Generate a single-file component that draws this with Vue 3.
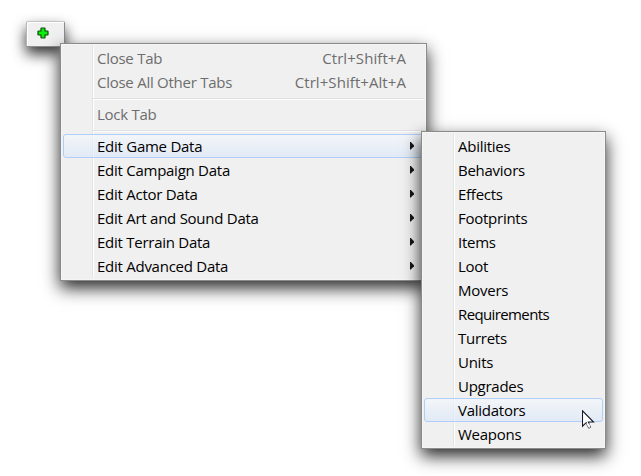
<script setup>
const main = [
  { label: 'Close Tab', keys: 'Ctrl+Shift+A', off: true },
  { label: 'Close All Other Tabs', keys: 'Ctrl+Shift+Alt+A', off: true },
  { sep: true },
  { label: 'Lock Tab', off: true },
  { sep: true },
  { label: 'Edit Game Data', sub: true, active: true },
  { label: 'Edit Campaign Data', sub: true },
  { label: 'Edit Actor Data', sub: true },
  { label: 'Edit Art and Sound Data', sub: true },
  { label: 'Edit Terrain Data', sub: true },
  { label: 'Edit Advanced Data', sub: true },
]
const types = ['Abilities', 'Behaviors', 'Effects', 'Footprints', 'Items', 'Loot', 'Movers', 'Requirements', 'Turrets', 'Units', 'Upgrades', 'Validators', 'Weapons']
</script>

<template>
  <main class="desktop">
    <div class="tab">
      <svg width="12" height="12" viewBox="0 0 12 12">
        <path d="M4 1.500Q4 1 4.500 1h3Q8 1 8 1.500V4h2.500Q11 4 11 4.500v3Q11 8 10.500 8H8v2.500Q8 11 7.500 11h-3Q4 11 4 10.500V8H1.500Q1 8 1 7.500v-3Q1 4 1.500 4H4z" fill="#0bf00b" stroke="#0b4a0b" stroke-width="1.200" />
      </svg>
    </div>
    <div class="menu primary">
      <template v-for="(m, i) in main" :key="i">
        <div v-if="m.sep" class="sep"></div>
        <div v-else class="item" :class="{ off: m.off, active: m.active }">
          <span>{{ m.label }}</span>
          <span v-if="m.keys" class="keys">{{ m.keys }}</span>
          <svg v-if="m.sub" class="arrow" width="4" height="8" viewBox="0 0 4 8"><path d="M0 0H.8L4 3.200V4.300L.8 7.500H0z" fill="#151515" /></svg>
        </div>
      </template>
    </div>
    <div class="menu secondary">
      <div v-for="t in types" :key="t" class="item" :class="{ active: t === 'Validators', long: t === 'Requirements' }"><span>{{ t }}</span></div>
    </div>
    <svg class="cursor" width="13" height="20" viewBox="0 0 13 20">
      <path d="M6.300 12.500L8.700 17.200Q7.800 18.700 6.600 18.100L4.200 13.200z" fill="#fff" stroke="#55555f" />
      <path d="M.5 .8V16.200L4.200 12.700L6.400 17L8 16L6.400 12H11.300z" fill="#fff" />
      <path d="M4.400 13.200L4.200 12.700L.5 16.200V.8L11.500 12H6.400L7 13.500" fill="none" stroke="#171728" stroke-width="1.100" />
    </svg>
  </main>
</template>

<style>
body { margin: 0; background: #fff; }
</style>
<style scoped>
.desktop {
  position: relative;
  width: 641px;
  height: 476px;
  overflow: hidden;
  background: #fff;
  font: 15px/24px "Open Sans", "Noto Sans", sans-serif;
  letter-spacing: -.26px;
  color: #000;
}
.tab {
  position: absolute;
  left: 26px;
  top: 21px;
  width: 39px;
  height: 26px;
  box-sizing: border-box;
  padding: 5px 0 0 10px;
  border: 1px solid #8c8c8c;
  border-top-color: #c4c4c4;
  border-left-color: #b4b4b4;
  border-radius: 2px 2px 0 0;
  background: #f0f0f0;
  box-shadow: inset 1px 1px #fff, 0 7px 14px rgba(0, 0, 0, .8);
}
.tab svg { display: block; }
.menu {
  position: absolute;
  box-sizing: border-box;
  padding: 2px;
  border: 1px solid #8b8b8b;
  background:
    linear-gradient(#e2e3e3, #e2e3e3) 31px 2px / 1px calc(100% - 4px) no-repeat,
    linear-gradient(#fff, #fff) 32px 2px / 1px calc(100% - 4px) no-repeat,
    #f0f0f0;
  box-shadow: inset 0 0 0 1px #f5f5f5, 0 7px 16px rgba(0, 0, 0, .85);
}
.primary { left: 60px; top: 43px; width: 367px; height: 238px; }
.secondary { left: 421px; top: 131px; width: 185px; height: 318px; }
.item {
  display: flex;
  align-items: center;
  box-sizing: border-box;
  height: 24px;
  padding: 0 18px 0 34px;
  white-space: nowrap;
}
.off { color: #6d6d6d; }
.long { letter-spacing: -.62px; }
.keys { margin-left: auto; letter-spacing: .07px; }
.arrow { margin-left: auto; margin-right: -8px; }
.active {
  padding-left: 33px;
  padding-right: 17px;
  border: 1px solid #aecff7;
  border-radius: 3px;
  background: linear-gradient(rgba(244, 247, 252, .7), rgba(220, 232, 248, .7));
}
.sep {
  height: 1px;
  margin: 4px 0 2px 30px;
  border-bottom: 1px solid #fff;
  background: #e0e0e0;
}
.cursor { position: absolute; left: 582px; top: 410px; }
</style>
